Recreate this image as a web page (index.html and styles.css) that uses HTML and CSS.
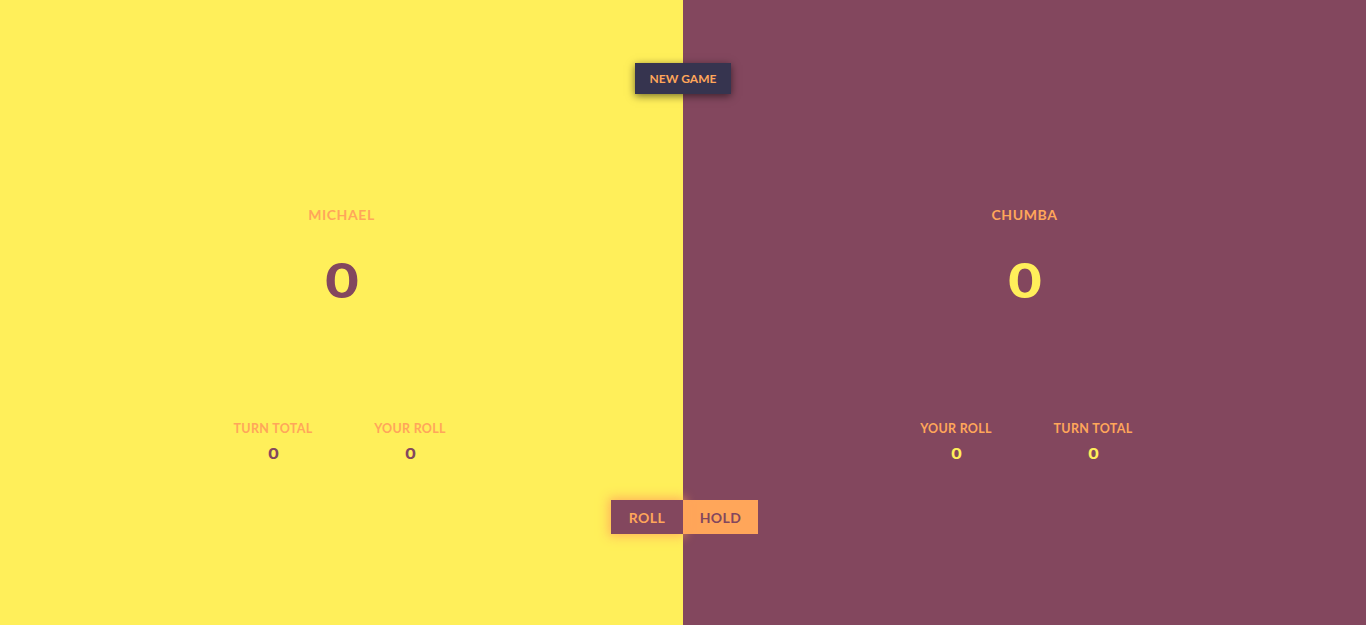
FILE: index.html
```html
<!DOCTYPE html>
<html>
<head>
<meta charset="utf-8">
<link rel="stylesheet" href="styles.css">
</head>
<body>
<main class="board">
  <section class="panel panel-left">
    <h2 class="name">MICHAEL</h2>
    <div class="score">0</div>
    <div class="stats">
      <div class="stat"><div class="stat-label">TURN TOTAL</div><div class="stat-value">0</div></div>
      <div class="stat"><div class="stat-label">YOUR ROLL</div><div class="stat-value">0</div></div>
    </div>
  </section>
  <section class="panel panel-right">
    <h2 class="name">CHUMBA</h2>
    <div class="score">0</div>
    <div class="stats">
      <div class="stat"><div class="stat-label">YOUR ROLL</div><div class="stat-value">0</div></div>
      <div class="stat"><div class="stat-label">TURN TOTAL</div><div class="stat-value">0</div></div>
    </div>
  </section>
  <button class="btn-new">NEW GAME</button>
  <div class="controls">
    <button class="btn btn-roll">ROLL</button>
    <button class="btn btn-hold">HOLD</button>
  </div>
</main>
</body>
</html>
```
FILE: styles.css
```css
html, body {
  margin: 0;
  padding: 0;
}
body {
  font-family: "Lato", "Open Sans", sans-serif;
  font-weight: 700;
}
.board {
  position: relative;
  display: flex;
  height: 625px;
  overflow: hidden;
}
.panel {
  flex: 1;
  display: flex;
  flex-direction: column;
  align-items: center;
  padding-top: 206px;
  box-sizing: border-box;
}
.panel-left {
  background: #ffef5a;
}
.panel-right {
  background: #83475e;
}
.name {
  margin: 0;
  font-size: 14px;
  line-height: 18px;
  font-weight: 700;
  color: #ffa65a;
  letter-spacing: 0.6px;
}
.score {
  margin-top: 29px;
  font-size: 48px;
  line-height: 54px;
  font-weight: 900;
  transform: scaleX(1.2);
}
.panel-left .score { color: #83475e; }
.panel-right .score { color: #ffef5a; }
.stats {
  display: flex;
  margin-top: 115px;
}
.stat {
  width: 137px;
  text-align: center;
}
.stat-label {
  font-size: 12.5px;
  line-height: 14px;
  color: #ffa65a;
  letter-spacing: 0.3px;
}
.stat-value {
  margin-top: 8px;
  font-size: 15px;
  line-height: 18px;
  font-weight: 900;
  transform: scaleX(1.2);
}
.panel-left .stat-value { color: #83475e; }
.panel-right .stat-value { color: #ffef5a; }

.btn-new {
  position: absolute;
  top: 63px;
  left: 635px;
  width: 96px;
  height: 31px;
  border: 0;
  background: #36344f;
  color: #ffa65a;
  font-family: inherit;
  font-weight: 700;
  font-size: 12px;
  box-shadow: 0 2px 8px rgba(0, 0, 0, 0.55);
  padding: 0;
}
.controls {
  position: absolute;
  top: 500px;
  left: 611px;
  display: flex;
}
.btn {
  height: 34px;
  border: 0;
  padding: 0;
  font-family: inherit;
  font-weight: 700;
  font-size: 14px;
  letter-spacing: 0.4px;
}
.btn-roll {
  width: 72px;
  background: #83475e;
  color: #ffa65a;
  box-shadow: 0 0 10px 2px rgba(255, 166, 90, 0.85);
  position: relative;
  z-index: 1;
}
.btn-hold {
  width: 75px;
  background: #ffa65a;
  color: #83475e;
}
```
